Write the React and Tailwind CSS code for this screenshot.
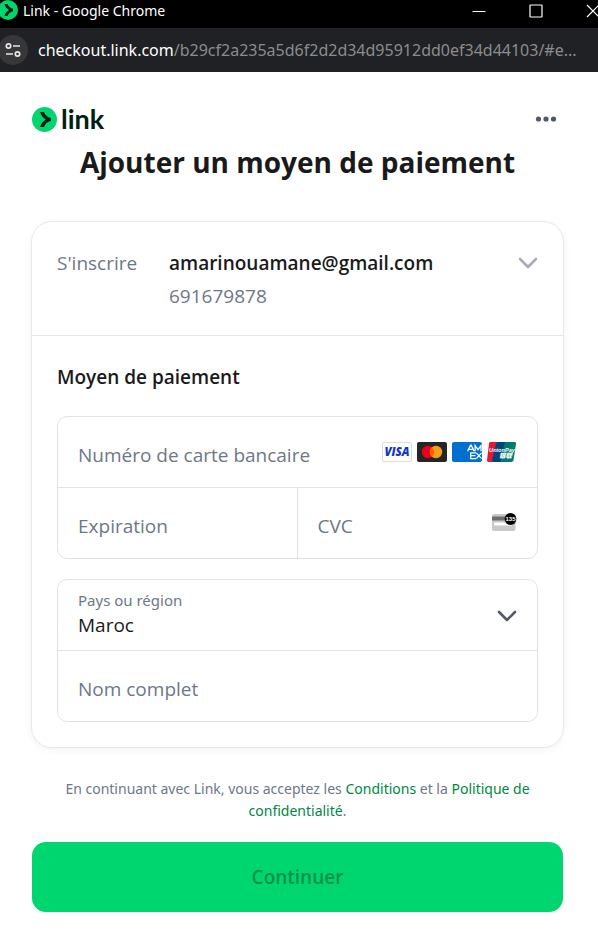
import React from "react";

const fieldText =
  "w-full min-w-0 bg-transparent text-[19px] leading-6 text-[#30313d] placeholder:text-[#6d7789] placeholder:opacity-100 outline-none";

function LinkMark({ className }) {
  return (
    <svg viewBox="0 0 24 24" className={className} aria-hidden="true">
      <circle cx="12" cy="12" r="12" fill="#00d66f" />
      <path
        d="M11.45 4.8H7.74c.72 3.01 2.82 5.58 5.46 7.2-2.64 1.62-4.74 4.19-5.46 7.2h3.71c.92-2.79 3.46-5.22 6.59-5.72v-2.97c-3.13-.49-5.67-2.92-6.59-5.71Z"
        fill="#011e0f"
      />
    </svg>
  );
}

function Chevron({ className }) {
  return (
    <svg viewBox="0 0 20 12" className={className} fill="none" stroke="currentColor" strokeWidth="2.6" strokeLinecap="round" strokeLinejoin="round" aria-hidden="true">
      <path d="M2 2l8 8 8-8" />
    </svg>
  );
}

function WindowBar() {
  return (
    <div className="flex h-7 items-center overflow-hidden bg-black font-['Noto_Sans',sans-serif] text-white">
      <LinkMark className="-ml-0.5 mb-2 h-5 w-5 shrink-0" />
      <span className="mb-1.5 ml-1 grow truncate pl-px text-[14px] leading-5">Link - Google Chrome</span>
      <div className="-mr-0.5 mb-1.5 flex shrink-0 items-center gap-[43px]">
        <button type="button" aria-label="Réduire">
          <svg viewBox="0 0 14 14" className="h-3.5 w-3.5" stroke="white" fill="none">
            <path d="M0.500 7.500h13" />
          </svg>
        </button>
        <button type="button" aria-label="Agrandir">
          <svg viewBox="0 0 14 14" className="h-3.5 w-3.5" stroke="white" fill="none">
            <rect x="1" y="1" width="12" height="12" rx="0.500" strokeWidth="1.200" />
          </svg>
        </button>
        <button type="button" aria-label="Fermer">
          <svg viewBox="0 0 14 14" className="h-3.5 w-3.5" stroke="white" fill="none">
            <path d="M1 1l12 12M13 1L1 13" strokeWidth="1.200" />
          </svg>
        </button>
      </div>
    </div>
  );
}

function AddressBar() {
  return (
    <div className="flex h-11 items-center overflow-hidden bg-[#202124] font-['Noto_Sans',sans-serif]">
      <button type="button" aria-label="Informations sur le site" className="-ml-0.5 flex h-[30px] w-[30px] shrink-0 items-center justify-center rounded-full bg-[#37373a]">
        <svg viewBox="0 0 16 16" className="h-4 w-4" fill="none" stroke="#e8e8e8" strokeWidth="1.700">
          <circle cx="3.500" cy="4" r="2.200" />
          <path d="M8 4h7M1 12h7" />
          <circle cx="12.500" cy="12" r="2.200" />
        </svg>
      </button>
      <span className="ml-2.5 whitespace-nowrap text-[16px] leading-6 text-[#8b8c8e]">
        <span className="text-white">checkout.link.com</span>/b29cf2a235a5d6f2d2d34d95912dd0ef34d44103/#e...
      </span>
    </div>
  );
}

function CardBrands() {
  return (
    <svg viewBox="0 0 135 20" className="h-5 w-[135px] shrink-0" role="img" aria-label="Visa, Mastercard, American Express, UnionPay">
      <rect x="0.500" y="0.500" width="29" height="19" rx="1.500" fill="#fff" stroke="#dcdcdf" />
      <text x="15" y="14.300" textAnchor="middle" fontSize="11.500" fontWeight="800" fontStyle="italic" fontFamily="Open Sans, sans-serif" fill="#1434cb">VISA</text>
      <rect x="35" width="30" height="20" rx="2" fill="#252525" />
      <circle cx="46" cy="10" r="6.200" fill="#eb001b" />
      <circle cx="54" cy="10" r="6.200" fill="#f79e1b" />
      <path d="M50 5.260a6.200 6.200 0 0 1 0 9.480a6.200 6.200 0 0 1 0-9.480Z" fill="#ff5f00" />
      <rect x="70" width="30" height="20" rx="2" fill="#016fd0" />
      <g fill="none" stroke="#fff" strokeWidth="1.300">
        <path d="M85.500 9.200L88.600 3.200h.6L92.100 9.200M87.200 7.400h3.400M93.100 9.200V3.600L96 7.600L99 3.600V9.200" />
        <path d="M94 10.900H88.700V16.600H94M88.700 13.700H93.500M94.300 10.900L99.600 16.600M99.600 10.900L94.300 16.600" />
      </g>
      <path d="M108 0H115L110.500 20H106.500Q104.700 20 105 18.200L107 1.500Q107.200 0 108 0Z" fill="#e21836" />
      <path d="M114.500 0H123.500L119.500 20H110.500Q109.800 18 111 14Z" fill="#00447c" />
      <path d="M123 0H132.500Q134.300 0 134 1.800L131.500 18.300Q131.200 20 129.500 20H119Q118.200 18 119.500 14Z" fill="#007b70" />
      <text x="120" y="9.800" textAnchor="middle" fontSize="5.600" fontWeight="700" fontStyle="italic" fontFamily="Liberation Sans, sans-serif" fill="#fff">UnionPay</text>
      <text x="123.500" y="16.200" textAnchor="middle" fontSize="6.500" fontWeight="900" fontStyle="italic" fontFamily="Noto Sans CJK SC, sans-serif" fill="#fff">银联</text>
    </svg>
  );
}

function CvcIcon() {
  return (
    <svg viewBox="0 0 25 18" className="mb-0.5 h-[18px] w-[25px] shrink-0" aria-hidden="true">
      <rect x="0" y="1" width="23.500" height="17" rx="2" fill="#c9c9c9" />
      <rect x="0" y="3.500" width="23.500" height="4" fill="#6f6f6f" />
      <rect x="2" y="9.500" width="18" height="3" rx="0.800" fill="#fff" />
      <circle cx="18.500" cy="6" r="5.900" fill="#000" />
      <text x="18.500" y="8.300" textAnchor="middle" fontSize="6" fontWeight="700" fontFamily="Liberation Sans, sans-serif" fill="#fff">135</text>
    </svg>
  );
}

export default function App() {
  return (
    <div className="min-h-screen bg-white font-['Open_Sans','Noto_Sans',sans-serif] text-[#1a1a1a]">
      <WindowBar />
      <AddressBar />

      <main className="pr-[35px] pl-8">
        <header className="flex h-[70px] items-center justify-between pt-6">
          <a href="#link" aria-label="link" className="flex items-center gap-1">
            <LinkMark className="h-[25px] w-[25px]" />
            <span className="font-['Lato',sans-serif] text-[27px] leading-7 font-bold text-[#011e0f]">link</span>
          </a>
          <button type="button" aria-label="Plus d'options" className="mr-1.5">
            <svg viewBox="0 0 22 6" className="h-1.5 w-[22px]" fill="#545969">
              <circle cx="3.500" cy="3" r="2.600" />
              <circle cx="11" cy="3" r="2.600" />
              <circle cx="18.500" cy="3" r="2.600" />
            </svg>
          </button>
        </header>

        <h1 className="text-center text-[28px] leading-10 font-bold">Ajouter un moyen de paiement</h1>

        <section className="mt-10 rounded-[20px] bg-white shadow-[0_0_0_1px_#e9e9eb,0_2px_10px_rgba(0,0,0,0.060)]">
          <div className="flex items-start border-b border-[#e9e9eb] px-[25px] pt-[25px] pb-[22px]">
            <div className="w-28 shrink-0 text-[19px] leading-[33px] text-[#6d7789]">S'inscrire</div>
            <div className="grow text-[19px] leading-[33px]">
              <div className="font-semibold">amarinouamane@gmail.com</div>
              <div className="text-[#6d7789]">691679878</div>
            </div>
            <button type="button" aria-label="Afficher les détails" className="mt-2.5 text-[#a9acb8]">
              <Chevron className="h-3 w-5" />
            </button>
          </div>

          <form id="payment" className="px-[25px] pt-[25px] pb-[25px]">
            <h2 className="text-[19px] leading-8 font-semibold">Moyen de paiement</h2>

            <div className="mt-[23px] rounded-[10px] border border-[#e0e3ea]">
              <div className="flex h-[70px] items-center px-5">
                <input aria-label="Numéro de carte bancaire" placeholder="Numéro de carte bancaire" inputMode="numeric" className={`${fieldText} pt-1.5`} />
                <CardBrands />
              </div>
              <div className="grid h-[71px] grid-cols-2 divide-x divide-[#e0e3ea] border-t border-[#e0e3ea]">
                <div className="flex items-center px-5">
                  <input aria-label="Expiration" placeholder="Expiration" inputMode="numeric" className={`${fieldText} pt-1.5`} />
                </div>
                <div className="flex items-center px-5">
                  <input aria-label="CVC" placeholder="CVC" inputMode="numeric" className={`${fieldText} pt-1.5`} />
                  <CvcIcon />
                </div>
              </div>
            </div>

            <div className="mt-5 rounded-[10px] border border-[#e0e3ea]">
              <div className="flex h-[70px] items-center px-5">
                <div className="flex min-w-0 grow flex-col pb-1">
                  <label htmlFor="country" className="font-['Noto_Sans',sans-serif] text-[15px] leading-6 text-[#6d7789]">Pays ou région</label>
                  <select id="country" defaultValue="MA" className="w-full appearance-none bg-transparent text-[19px] leading-[26px] outline-none">
                    <option value="MA">Maroc</option>
                  </select>
                </div>
                <Chevron className="mt-0.5 h-3 w-5 shrink-0 text-[#545969]" />
              </div>
              <div className="flex h-[71px] items-center border-t border-[#e0e3ea] px-5">
                <input aria-label="Nom complet" placeholder="Nom complet" autoComplete="name" className={`${fieldText} pt-1.5`} />
              </div>
            </div>
          </form>
        </section>

        <p className="mt-[31px] px-5 text-center font-['Noto_Sans',sans-serif] text-[14px] leading-[22px] text-[#6d7789]">
          En continuant avec Link, vous acceptez les <a href="#conditions" className="text-[#00873f]">Conditions</a> et la{" "}
          <a href="#confidentialite" className="text-[#00873f]">Politique de confidentialité</a>.
        </p>

        <button type="submit" form="payment" className="mt-5 h-[70px] w-full rounded-[14px] bg-[#00d66f] text-[19px] leading-6 font-semibold text-[#00914a]">
          Continuer
        </button>
      </main>
    </div>
  );
}
